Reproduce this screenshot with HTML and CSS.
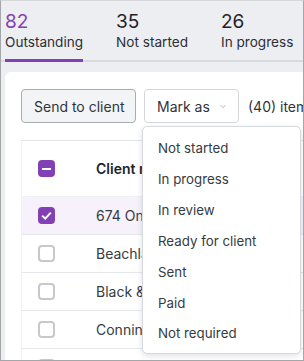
FILE: index.html
```html
<!DOCTYPE html>
<html lang="en">
<head>
    <meta charset="UTF-8">
    <meta name="viewport" content="width=device-width, initial-scale=1.0">
    <title>Jobs</title>
    <link rel="stylesheet" href="styles.css">
</head>
<body>
    <div class="frame">
        <nav class="tabs">
            <div class="tab active">
                <span class="count">82</span>
                <span class="label">Outstanding</span>
            </div>
            <div class="tab">
                <span class="count">35</span>
                <span class="label">Not started</span>
            </div>
            <div class="tab">
                <span class="count">26</span>
                <span class="label">In progress</span>
            </div>
        </nav>

        <section class="panel">
            <div class="toolbar">
                <button class="btn btn-grey">Send to client</button>
                <div class="menu-wrap">
                    <button class="btn btn-white">Mark as
                        <svg class="chevron" width="8" height="5" viewBox="0 0 8 5"><path d="M0.8 0.8l3.2 3.2 3.2-3.2" fill="none" stroke="#9aa0a8" stroke-width="1"/></svg>
                    </button>
                    <ul class="menu">
                        <li>Not started</li>
                        <li>In progress</li>
                        <li>In review</li>
                        <li>Ready for client</li>
                        <li>Sent</li>
                        <li>Paid</li>
                        <li>Not required</li>
                    </ul>
                </div>
                <span class="count-text">(40) items selected</span>
            </div>

            <div class="table">
                <div class="row head">
                    <span class="check partial"><i></i></span>
                    <span class="cell">Client name</span>
                </div>
                <div class="row selected">
                    <span class="check checked">
                        <svg width="11" height="9" viewBox="0 0 11 9"><path d="M1.2 4.6l3 3L9.8 1.6" fill="none" stroke="#fff" stroke-width="2"/></svg>
                    </span>
                    <span class="cell">674 Onslow Road</span>
                </div>
                <div class="row">
                    <span class="check"></span>
                    <span class="cell">Beachlands Ltd</span>
                </div>
                <div class="row">
                    <span class="check"></span>
                    <span class="cell">Black &amp; White Co</span>
                </div>
                <div class="row">
                    <span class="check"></span>
                    <span class="cell">Connington Trust</span>
                </div>
                <div class="row">
                    <span class="check"></span>
                    <span class="cell">Dunmore Farms</span>
                </div>
            </div>
        </section>
    </div>
</body>
</html>
```

FILE: styles.css
```css
body {
    margin: 0;
    font-family: 'Inter', 'Noto Sans', sans-serif;
    color: #2b2f36;
}

.frame {
    box-sizing: border-box;
    width: 304px;
    height: 361px;
    border: 1px solid #a4a6aa;
    border-top-color: #d4d6da;
    background: #eceef2;
    overflow: hidden;
}

.tabs {
    display: flex;
    gap: 33px;
    padding: 9px 0 0 4px;
    border-bottom: 2px solid #d7dade;
}

.tab {
    display: flex;
    flex-direction: column;
    padding-bottom: 8px;
    margin-bottom: -2px;
    border-bottom: 3px solid transparent;
    white-space: nowrap;
}

.tab .count {
    font-size: 19px;
    line-height: 24px;
    color: #1f2329;
}

.tab .label {
    font-size: 13.6px;
    line-height: 17px;
    color: #2b2f36;
}

.tab.active {
    border-bottom-color: #8240b4;
}

.tab.active .count {
    color: #8240b4;
}

.panel {
    margin: 10px 0 0 4px;
    width: 320px;
    background: #fff;
    border-radius: 6px 0 0 0;
    padding: 17px 0 0 16px;
}

.toolbar {
    display: flex;
    align-items: center;
    gap: 8px;
    padding-bottom: 17px;
    border-bottom: 1px solid #e3e5e8;
    white-space: nowrap;
}

.btn {
    box-sizing: border-box;
    height: 34px;
    font-family: inherit;
    font-size: 14px;
    color: #2f343b;
    border-radius: 4px;
    padding: 0 12px;
}

.btn-grey {
    width: 115px;
    background: #f3f4f6;
    border: 1px solid #a7abb2;
}

.btn-white {
    width: 95px;
    background: #fff;
    border: 1px solid #d3d6db;
    display: flex;
    align-items: center;
    gap: 10px;
}

.chevron {
    margin-top: 1px;
}

.menu-wrap {
    position: relative;
}

.count-text {
    font-size: 14px;
    color: #2f343b;
    margin-left: 1px;
}

.menu {
    position: absolute;
    left: -2px;
    top: 37px;
    z-index: 2;
    width: 159px;
    box-sizing: border-box;
    margin: 0;
    padding: 6px 0 4px;
    list-style: none;
    background: #fff;
    border: 1px solid #d6d9dd;
    border-radius: 5px;
    box-shadow: 0 2px 6px rgba(0, 0, 0, 0.12);
}

.menu li {
    font-size: 13.3px;
    line-height: 30.9px;
    padding-left: 15px;
    color: #363b42;
}

.table {
    border-left: 1px solid #eef0f2;
}

.row {
    display: flex;
    align-items: center;
    height: 37px;
    border-bottom: 1px solid #e6e8eb;
    font-size: 14px;
    color: #363b42;
    white-space: nowrap;
}

.row.head {
    height: 55px;
    font-weight: 600;
    color: #1f2329;
    border-bottom-color: #eef0f2;
}

.row.selected {
    background: #f6f1fa;
}

.check {
    box-sizing: border-box;
    flex: none;
    width: 17px;
    height: 17px;
    margin: 0 41px 0 16px;
    border: 2px solid #c6c8cc;
    border-radius: 4px;
    display: flex;
    align-items: center;
    justify-content: center;
}

.check.partial,
.check.checked {
    background: #8240b4;
    border-color: #8240b4;
}

.check.partial i {
    display: block;
    width: 9px;
    height: 2px;
    background: #fff;
}
```
